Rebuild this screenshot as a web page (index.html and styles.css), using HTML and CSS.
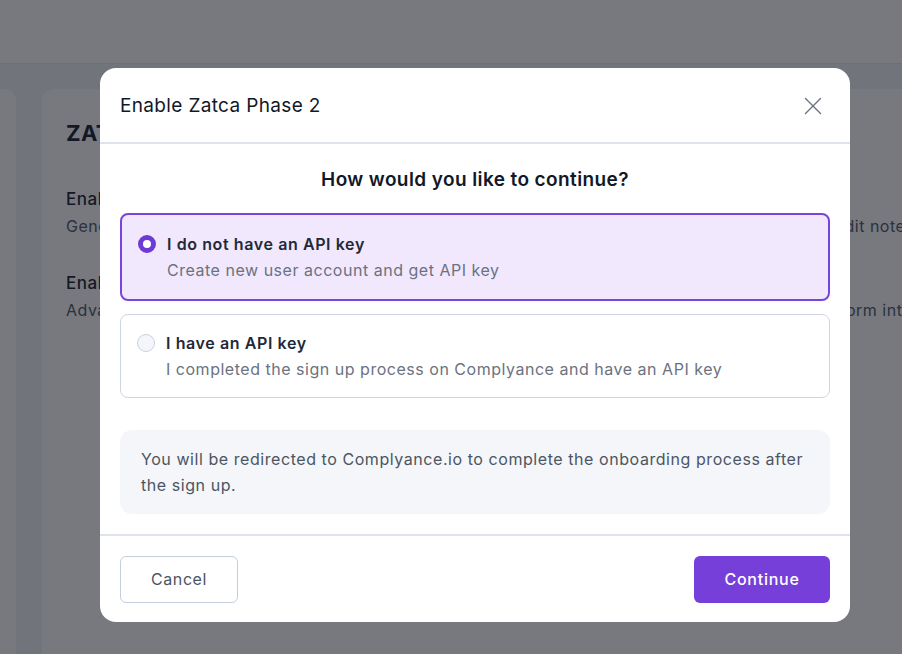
FILE: index.html
```html
<!DOCTYPE html>
<html lang="en">
<head>
<meta charset="utf-8">
<title>Enable Zatca Phase 2</title>
<link rel="stylesheet" href="styles.css">
</head>
<body>
<div class="page">
  <header class="topbar"></header>
  <main class="content">
    <aside class="side-card"></aside>
    <section class="card">
      <h1 class="card-title">ZATCA Phase 2</h1>
      <div class="setting">
        <div class="setting-title">Enable ZATCA Phase 2</div>
        <div class="setting-desc">Generates ZATCA compliant standard tax invoices, simplified tax e-invoices, debit notes, and credit notes</div>
      </div>
      <div class="setting">
        <div class="setting-title">Enable simplified invoices</div>
        <div class="setting-desc">Advanced settings for reporting and clearances of all e-invoices through the ZATCA Fatoora platform integration</div>
      </div>
    </section>
  </main>
</div>

<div class="overlay"></div>

<div class="modal" role="dialog" aria-labelledby="modal-title">
  <div class="modal-header">
    <h2 id="modal-title" class="modal-title">Enable Zatca Phase 2</h2>
    <button class="close-btn" aria-label="Close">
      <svg width="18" height="18" viewBox="0 0 18 18" fill="none" stroke="#6b7280" stroke-width="1.4" stroke-linecap="round">
        <path d="M1.5 1.5 L16.5 16.5 M16.5 1.5 L1.5 16.5"/>
      </svg>
    </button>
  </div>
  <div class="modal-body">
    <h3 class="question">How would you like to continue?</h3>
    <label class="option option-selected">
      <span class="radio radio-on"></span>
      <span class="option-text">
        <span class="option-title">I do not have an API key</span>
        <span class="option-desc">Create new user account and get API key</span>
      </span>
    </label>
    <label class="option">
      <span class="radio"></span>
      <span class="option-text">
        <span class="option-title">I have an API key</span>
        <span class="option-desc">I completed the sign up process on Complyance and have an API key</span>
      </span>
    </label>
    <div class="info">You will be redirected to Complyance.io to complete the onboarding process after the sign up.</div>
  </div>
  <div class="modal-footer">
    <button class="btn btn-cancel">Cancel</button>
    <button class="btn btn-primary">Continue</button>
  </div>
</div>
</body>
</html>
```

FILE: styles.css
```css
* { box-sizing: border-box; }
html, body { margin: 0; padding: 0; }
body {
  width: 902px;
  height: 654px;
  overflow: hidden;
  font-family: Inter, "Noto Sans", Arial, sans-serif;
  letter-spacing: 0.5px;
  background: #f3f4f6;
  position: relative;
}

.page { width: 902px; height: 654px; display: flex; flex-direction: column; }
.topbar { height: 64px; background: #ffffff; border-bottom: 1px solid #e5e7eb; flex: none; }
.content { flex: 1; display: flex; gap: 26px; padding-top: 25px; }
.side-card { width: 16px; background: #fff; border-radius: 0 12px 0 0; flex: none; }
.card {
  flex: 1;
  background: #fff;
  border-radius: 12px 0 0 0;
  padding: 24px 0 0 24px;
  white-space: nowrap;
  overflow: hidden;
}
.card-title { margin: 0 0 34px; font-size: 22px; line-height: 40px; font-weight: 700; color: #111827; letter-spacing: 0.3px; }
.setting { margin-bottom: 30px; }
.setting-title { font-size: 17px; line-height: 24px; color: #111827; font-weight: 500; }
.setting-desc { font-size: 16px; line-height: 30px; color: #4b5563; }

.overlay {
  position: absolute;
  inset: 0;
  background: rgba(20, 24, 34, 0.58);
}

.modal {
  position: absolute;
  left: 100px;
  top: 68px;
  width: 750px;
  height: 554px;
  background: #fff;
  border-radius: 16px;
  display: flex;
  flex-direction: column;
  overflow: hidden;
}
.modal-header {
  height: 76px;
  flex: none;
  display: flex;
  align-items: center;
  justify-content: space-between;
  padding: 2px 28px 0 20px;
  border-bottom: 2px solid #dfe3ec;
}
.modal-title { margin: 0; font-size: 19px; font-weight: 400; color: #111827; line-height: 28px; letter-spacing: 0.35px; }
.close-btn { border: 0; background: none; padding: 0; width: 18px; height: 18px; display: flex; cursor: pointer; }

.modal-body {
  flex: 1;
  padding: 22px 20px 0;
  display: flex;
  flex-direction: column;
  border-bottom: 2px solid #dfe3ec;
}
.question {
  margin: 0 0 19px;
  text-align: center;
  font-size: 19px;
  line-height: 28px;
  font-weight: 600;
  color: #111827;
  letter-spacing: 0.4px;
}
.option {
  display: flex;
  align-items: flex-start;
  border: 1px solid #cfd6e1;
  border-radius: 8px;
  padding: 16px;
  margin-bottom: 13px;
  background: #fff;
}
.option-selected {
  border: 2px solid #7a44dc;
  background: #f1e8fe;
  padding: 17px 16px;
}
.radio {
  width: 18px;
  height: 18px;
  border-radius: 50%;
  border: 1px solid #c9d1de;
  background: #f4f6fb;
  flex: none;
  margin: 3px 11px 0 0;
}
.radio-on {
  border: 5.5px solid #6d3bd3;
  background: #fff;
}
.option-text { display: flex; flex-direction: column; gap: 2px; }
.option-title { font-size: 16px; line-height: 24px; font-weight: 600; color: #1f2937; letter-spacing: 0.6px; }
.option-desc { font-size: 16px; line-height: 24px; color: #6b7280; letter-spacing: 0.52px; }

.info {
  margin-top: 19px;
  background: #f4f6fa;
  border-radius: 12px;
  padding: 16px 26px 16px 21px;
  font-size: 16px;
  line-height: 26px;
  color: #4b5563;
  letter-spacing: 0.56px;
}

.modal-footer {
  height: 86px;
  flex: none;
  display: flex;
  align-items: center;
  justify-content: space-between;
  padding: 0 20px;
}
.btn {
  height: 47px;
  font-family: inherit;
  font-size: 16px;
  border-radius: 6px;
  cursor: pointer;
  letter-spacing: 0.6px;
}
.btn-cancel {
  width: 118px;
  background: #fff;
  border: 1px solid #c5cedb;
  color: #4b5563;
}
.btn-primary {
  width: 136px;
  background: #763fd9;
  border: 0;
  color: #fff;
  font-weight: 500;
  letter-spacing: 0.75px;
}
```
